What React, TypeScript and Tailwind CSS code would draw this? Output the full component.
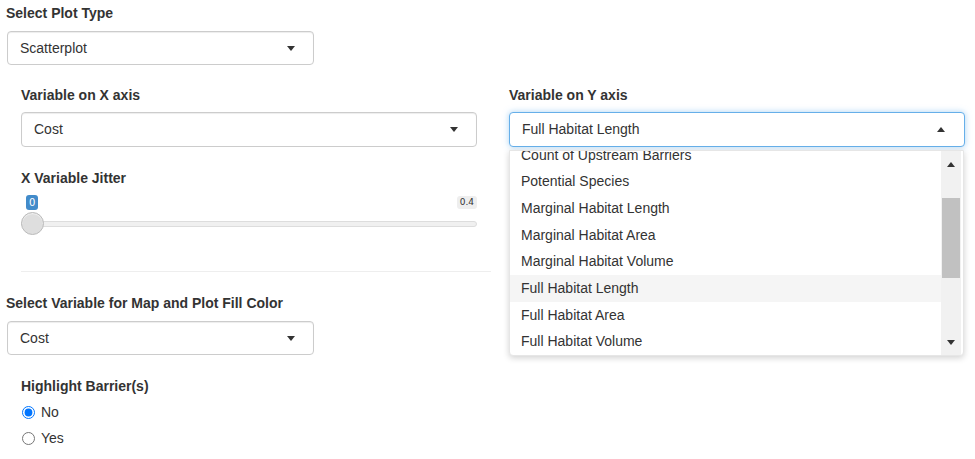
import React from 'react';

const Caret = ({ up = false }: { up?: boolean }) => (
  <span
    className={
      up
        ? 'inline-block w-0 h-0 border-x-[4px] border-x-transparent border-b-[5px] border-b-[#333]'
        : 'inline-block w-0 h-0 border-x-[4px] border-x-transparent border-t-[5px] border-t-[#333]'
    }
  />
);

const Select = ({ value, className = '' }: { value: string; className?: string }) => (
  <div
    className={`flex items-center justify-between h-[34px] pl-[12px] pr-[18px] bg-white border border-[#ccc] rounded-[4px] shadow-[inset_0_1px_1px_rgba(0,0,0,0.075)] ${className}`}
  >
    <span>{value}</span>
    <Caret />
  </div>
);

const options = [
  'Count of Upstream Barriers',
  'Potential Species',
  'Marginal Habitat Length',
  'Marginal Habitat Area',
  'Marginal Habitat Volume',
  'Full Habitat Length',
  'Full Habitat Area',
  'Full Habitat Volume',
];

const Label = ({ children, className = '' }: { children: React.ReactNode; className?: string }) => (
  <div className={`font-bold leading-[20px] ${className}`}>{children}</div>
);

const App = () => {
  return (
    <div className="w-[975px] h-[459px] overflow-hidden bg-white text-[#333] text-[14px] font-['Liberation_Sans',Arial,sans-serif]">
      {/* Plot type */}
      <div className="pl-[7px] pt-[3px]">
        <Label className="-ml-[1px]">Select Plot Type</Label>
        <Select value="Scatterplot" className="w-[307px] mt-[8px]" />
      </div>

      {/* Axis variables */}
      <div className="flex gap-[32px] pl-[21px] mt-[20px]">
        <div className="w-[456px]">
          <Label>Variable on X axis</Label>
          <Select value="Cost" className="mt-[7px] h-[35px]" />

          <Label className="mt-[21px]">X Variable Jitter</Label>
          <div className="relative h-[62px]">
            <span className="absolute left-[5px] top-[7px] h-[15px] px-[3px] rounded-[3px] bg-[#428bca] text-white text-[10px] leading-[15px] font-['DejaVu_Sans',sans-serif]">
              0
            </span>
            <span className="absolute right-[0px] top-[8px] h-[13px] px-[3px] rounded-[3px] bg-[#eee] text-[#333] text-[9px] leading-[13px] font-['DejaVu_Sans',sans-serif]">
              0.4
            </span>
            <div className="absolute left-[0px] right-[0px] top-[33px] h-[6px] rounded-[3px] bg-[#f0f0f0] border border-[#ddd]" />
            <div className="absolute left-[0px] top-[24px] w-[23px] h-[23px] rounded-full bg-[#dedede] border border-[#bbb] shadow-[inset_0_1px_1px_rgba(255,255,255,0.6)]" />
          </div>
          <div className="mt-[21px] h-px bg-[#eee] w-[470px]" />
        </div>

        <div className="w-[456px]">
          <Label>Variable on Y axis</Label>
          <div className="relative mt-[7px]">
            <div className="flex items-center justify-between h-[35px] pl-[12px] pr-[19px] bg-white border border-[#66afe9] rounded-[4px] shadow-[0_0_6px_rgba(102,175,233,0.55)]">
              <span>Full Habitat Length</span>
              <Caret up />
            </div>
            {/* open dropdown */}
            <div className="absolute left-[0px] top-[38px] w-[455px] h-[206px] bg-white rounded-b-[4px] shadow-[0_2px_6px_rgba(0,0,0,0.18)] border border-[#e6e6e6] overflow-hidden flex z-10">
              <div className="flex-1 overflow-hidden">
                <div className="-mt-[9.5px]">
                  {options.map((o) => (
                    <div
                      key={o}
                      className={`h-[26.7px] leading-[26.7px] pl-[11px] ${
                        o === 'Full Habitat Length' ? 'bg-[#f5f5f5]' : ''
                      }`}
                    >
                      {o}
                    </div>
                  ))}
                </div>
              </div>
              <div className="w-[20px] mr-[2px] bg-[#f1f1f1] flex flex-col items-center">
                <div className="h-[26px] flex items-center justify-center">
                  <Caret up />
                </div>
                <div className="mt-[21px] w-[18px] h-[80px] bg-[#c1c1c1]" />
                <div className="flex-1" />
                <div className="h-[26px] flex items-center justify-center">
                  <Caret />
                </div>
              </div>
            </div>
          </div>
        </div>
      </div>

      {/* Fill color */}
      <div className="pl-[7px] mt-[21px]">
        <Label className="-ml-[1px]">Select Variable for Map and Plot Fill Color</Label>
        <Select value="Cost" className="w-[307px] mt-[8px]" />
      </div>

      {/* Highlight */}
      <div className="pl-[21px] mt-[21px]">
        <Label>Highlight Barrier(s)</Label>
        <div className="mt-[6px] flex flex-col gap-[6px] pl-[1px]">
          <label className="flex items-center gap-[6px] h-[20px]">
            <input type="radio" name="hl" defaultChecked className="w-[13px] h-[13px] m-0 accent-[#0075ff]" />
            <span>No</span>
          </label>
          <label className="flex items-center gap-[6px] h-[20px]">
            <input type="radio" name="hl" className="w-[13px] h-[13px] m-0" />
            <span>Yes</span>
          </label>
        </div>
      </div>
    </div>
  );
};

export default App;
